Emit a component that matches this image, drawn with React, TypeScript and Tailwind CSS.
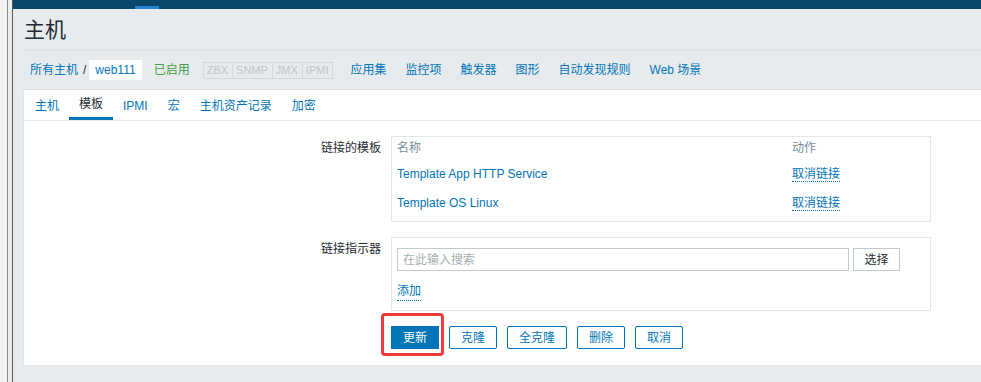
const FONT = "font-['Liberation_Sans','Noto_Sans_CJK_SC',sans-serif]";

const hostLinks = ["应用集", "监控项", "触发器", "图形", "自动发现规则", "Web 场景"];
const badges = ["ZBX", "SNMP", "JMX", "IPMI"];
const tabs = ["主机", "模板", "IPMI", "宏", "主机资产记录", "加密"];
const templates = ["Template App HTTP Service", "Template OS Linux"];
const actions = ["克隆", "全克隆", "删除", "取消"];

export default function App() {
  return (
    <div className={`${FONT} flex h-[382px] w-[981px] overflow-hidden bg-[#e8ebee] text-[12px] text-[#1f2c33]`}>
      {/* left window edge */}
      <div className="flex w-[13px] shrink-0">
        <div className="w-[7px] bg-[#f2f2f2]" />
        <div className="w-px bg-[#8c8c8c]" />
        <div className="w-[4px] bg-[#ececec]" />
        <div className="w-px bg-[#555]" />
      </div>

      <div className="flex min-w-0 flex-1 flex-col">
        {/* top bar */}
        <div className="relative h-[9px] shrink-0 bg-[#0a466a]">
          <div className="absolute left-[122px] top-[6px] h-[3px] w-[24px] bg-[#1f85cc]" />
        </div>

        <div className="flex flex-1 flex-col pl-[10px] pb-[16px]">
          {/* title */}
          <div className="flex h-[42px] items-center border-b border-[#dbe1e5] pl-px">
            <h1 className="text-[21px] leading-none text-[#1f2c33]">主机</h1>
          </div>

          {/* breadcrumb / host nav */}
          <div className="flex h-[39px] items-center border-b border-[#dbe1e5] pl-[7px]">
            <span className="text-[#0275b8]">所有主机</span>
            <span className="ml-[5px] mr-[3px]">/</span>
            <span className="flex h-[20px] items-center bg-white px-[6px] text-[#0275b8]">web111</span>
            <span className="ml-[12px] text-[#429e47]">已启用</span>
            <div className="ml-[13px] flex">
              {badges.map((b) => (
                <span
                  key={b}
                  className="-ml-px flex h-[17px] items-center border border-[#d5d9dc] pl-[3px] pr-[4px] text-[11px] text-[#c0c4c7] first:ml-0"
                >
                  {b}
                </span>
              ))}
            </div>
            <div className="ml-[17px] flex gap-[19px]">
              {hostLinks.map((l) => (
                <span key={l} className="text-[#0275b8]">
                  {l}
                </span>
              ))}
            </div>
          </div>

          {/* white panel */}
          <div className="flex flex-1 flex-col border-b border-l border-[#dfe4e7] bg-white">
            <div className="flex h-[31px] border-b border-[#e6e9ec] pl-px">
              {tabs.map((t) => {
                const active = t === "模板";
                return (
                  <div
                    key={t}
                    className={`flex items-center px-[10px] pt-px ${
                      active ? "border-b-[3px] border-[#0275b8] text-[#1f2c33]" : "text-[#0275b8]"
                    }`}
                  >
                    {t}
                  </div>
                );
              })}
            </div>

            <div className="flex flex-col gap-[15px] pt-[15px]">
              {/* linked templates */}
              <div className="flex">
                <div className="w-[367px] shrink-0 pr-[10px] pt-[3px] text-right">链接的模板</div>
                <div className="w-[540px] border border-[#e3e6e9] px-[5px] pb-[4px]">
                  <div className="grid h-[22px] grid-cols-[395px_1fr] items-center text-[#768d99]">
                    <span>名称</span>
                    <span>动作</span>
                  </div>
                  {templates.map((t) => (
                    <div key={t} className="grid h-[29px] grid-cols-[395px_1fr] items-center">
                      <span className="text-[#0275b8]">{t}</span>
                      <span>
                        <span className="border-b border-dotted border-[#0275b8] text-[#0275b8]">取消链接</span>
                      </span>
                    </div>
                  ))}
                </div>
              </div>

              {/* link new templates */}
              <div className="flex">
                <div className="w-[367px] shrink-0 pr-[10px] pt-[3px] text-right">链接指示器</div>
                <div className="flex w-[540px] flex-col border border-[#e3e6e9] px-[5px] pb-[10px] pt-[10px]">
                  <div className="flex gap-[4px]">
                    <div className="flex h-[23px] w-[452px] items-center border border-[#c0c9ce] px-[5px] text-[#a7adb1]">
                      在此输入搜索
                    </div>
                    <button className="h-[23px] w-[47px] border border-[#c0c9ce] bg-white text-[#1f2c33]">选择</button>
                  </div>
                  <div className="mt-[11px] flex h-[18px] items-center">
                    <span className="border-b border-dotted border-[#0275b8] text-[#0275b8]">添加</span>
                  </div>
                </div>
              </div>

              {/* form buttons */}
              <div className="flex">
                <div className="w-[367px] shrink-0" />
                <div className="relative flex gap-[10px]">
                  <div className="absolute -left-[10px] -top-[13px] h-[43px] w-[63px] rounded-[4px] border-[3px] border-[#ef3a3a]" />
                  <button className="h-[23px] w-[48px] bg-[#0275b8] text-white">更新</button>
                  {actions.map((a) => (
                    <button
                      key={a}
                      className="h-[23px] rounded-[2px] border border-[#0275b8] bg-white px-[11px] text-[#0275b8]"
                    >
                      {a}
                    </button>
                  ))}
                </div>
              </div>
            </div>
          </div>
        </div>
      </div>
    </div>
  );
}
